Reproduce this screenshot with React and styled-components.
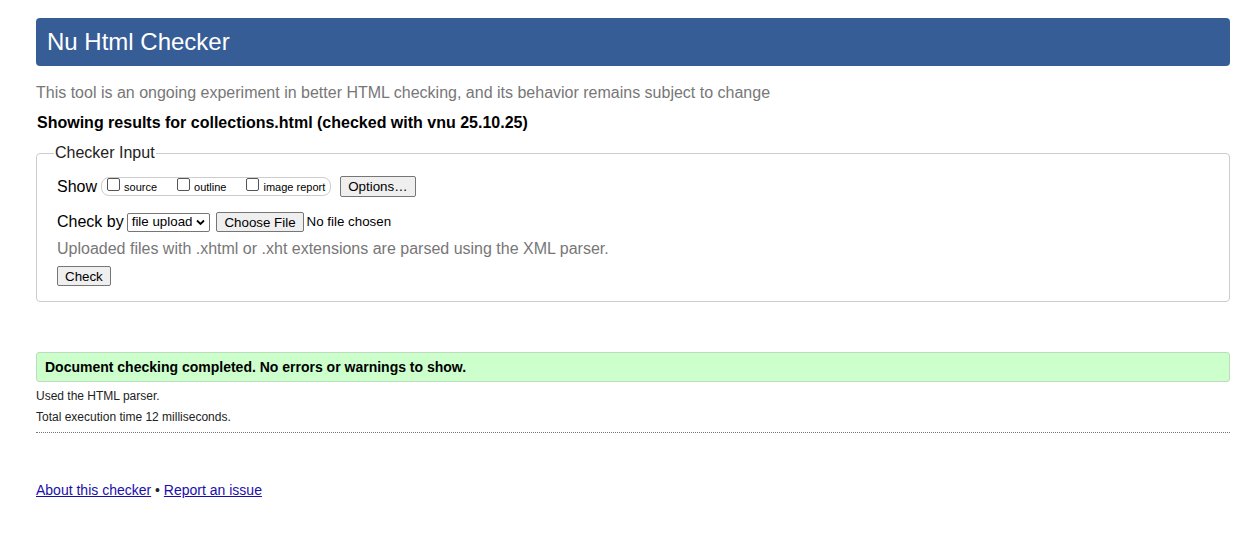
import React from "react";
import styled, { createGlobalStyle } from "styled-components";

const GlobalStyle = createGlobalStyle`
  body {
    margin: 0;
    background: #fff;
    font-family: "Liberation Sans", Arial, sans-serif;
    color: #000;
  }
`;

const Page = styled.div`
  padding: 18px 22px 40px 36px;
`;

const Header = styled.h1`
  margin: 0;
  height: 48px;
  display: flex;
  align-items: center;
  padding: 0 11px;
  background: #365d95;
  border-radius: 4px;
  color: #fff;
  font-size: 24px;
  font-weight: normal;
`;

const Intro = styled.p`
  margin: 18px 0 0;
  font-size: 16px;
  line-height: 18px;
  color: #777;
`;

const ResultsTitle = styled.p`
  margin: 12px 0 0 1px;
  font-size: 16px;
  line-height: 18px;
  font-weight: bold;
`;

const InputFieldset = styled.fieldset`
  margin: 12px 0 0;
  padding: 14px 20px 15px;
  border: 1px solid #ccc;
  border-radius: 4px;
`;

const Legend = styled.legend`
  margin-left: -3px;
  padding: 0 1px;
  font-size: 16px;
  color: #222;
`;

const Row = styled.div`
  display: flex;
  align-items: center;
  gap: ${(p) => p.gap || 6}px;
  margin-top: ${(p) => p.top || 0}px;
  font-size: 16px;
  line-height: 18px;
`;

const ShowGroup = styled.div`
  display: flex;
  align-items: flex-start;
  height: 17px;
  padding: 0 5px 0 5px;
  border: 1px solid #ccc;
  border-radius: 8px;
  gap: 20px;
  margin-left: -1px;
`;

const Opt = styled.label`
  display: flex;
  align-items: flex-start;
  font-size: 11px;
  gap: 4px;
`;

const Box = styled.span`
  width: 11px;
  height: 11px;
  border: 1px solid #555;
  border-radius: 2px;
`;

const OptText = styled.span`
  padding-top: 3px;
  line-height: 13px;
`;

const Button = styled.button`
  font-family: "Liberation Sans", Arial, sans-serif;
  font-size: 13.33px;
  height: ${(p) => p.h || 20}px;
  padding: 0 ${(p) => p.px || 6}px;
  background: #efefef;
  border: 1px solid #767676;
  border-radius: 2px;
  color: #000;
  margin-left: ${(p) => p.ml || 0}px;
`;

const Select = styled.div`
  display: flex;
  align-items: center;
  gap: 4px;
  height: 17px;
  padding: 0 4px;
  border: 1px solid #767676;
  border-radius: 2px;
  font-size: 13.33px;
  margin-left: -1px;
`;

const FileNote = styled.span`
  font-size: 13.33px;
  margin-left: -1px;
`;

const Hint = styled.p`
  margin: 8px 0 0;
  font-size: 16px;
  line-height: 18px;
  color: #777;
`;

const Success = styled.div`
  margin-top: 50px;
  height: 28px;
  display: flex;
  align-items: center;
  padding-left: 8px;
  background: #ccffcc;
  border: 1px solid #bbddbb;
  border-radius: 3px;
  font-size: 14px;
  font-weight: bold;
`;

const Small = styled.p`
  margin: ${(p) => p.top}px 0 0;
  font-size: 12px;
  line-height: 14px;
  color: #222;
`;

const Rule = styled.hr`
  margin: 8px 0 0;
  border: 0;
  border-top: 1px dotted #777;
`;

const Footer = styled.p`
  margin: 49px 0 0;
  font-size: 14px;
  line-height: 16px;
  color: #222;
`;

const Link = styled.a`
  color: #1a0dab;
  text-decoration: underline;
`;

const Chevron = () => (
  <svg width="9" height="7" viewBox="0 0 9 7">
    <path d="M1 1.5 L4.5 5 L8 1.5" stroke="#000" strokeWidth="1.8" fill="none" />
  </svg>
);

export default function App() {
  return (
    <Page>
      <GlobalStyle />
      <Header>Nu Html Checker</Header>
      <Intro>
        This tool is an ongoing experiment in better HTML checking, and its
        behavior remains subject to change
      </Intro>
      <ResultsTitle>
        Showing results for collections.html (checked with vnu 25.10.25)
      </ResultsTitle>

      <InputFieldset>
        <Legend>Checker Input</Legend>
        <Row gap={5}>
          Show
          <ShowGroup>
            <Opt>
              <Box />
              <OptText>source</OptText>
            </Opt>
            <Opt>
              <Box />
              <OptText>outline</OptText>
            </Opt>
            <Opt>
              <Box />
              <OptText>image report</OptText>
            </Opt>
          </ShowGroup>
          <Button h={21} px={7} ml={4}>
            Options…
          </Button>
        </Row>
        <Row top={15} gap={4}>
          Check by
          <Select>
            file upload
            <Chevron />
          </Select>
          <Button h={20} px={7} ml={2}>
            Choose File
          </Button>
          <FileNote>No file chosen</FileNote>
        </Row>
        <Hint>Uploaded files with .xhtml or .xht extensions are parsed using the XML parser.</Hint>
        <Row top={8}>
          <Button h={20} px={7}>
            Check
          </Button>
        </Row>
      </InputFieldset>

      <Success>Document checking completed. No errors or warnings to show.</Success>
      <Small top={7}>Used the HTML parser.</Small>
      <Small top={7}>Total execution time 12 milliseconds.</Small>
      <Rule />
      <Footer>
        <Link href="#">About this checker</Link> •{" "}
        <Link href="#">Report an issue</Link>
      </Footer>
    </Page>
  );
}
